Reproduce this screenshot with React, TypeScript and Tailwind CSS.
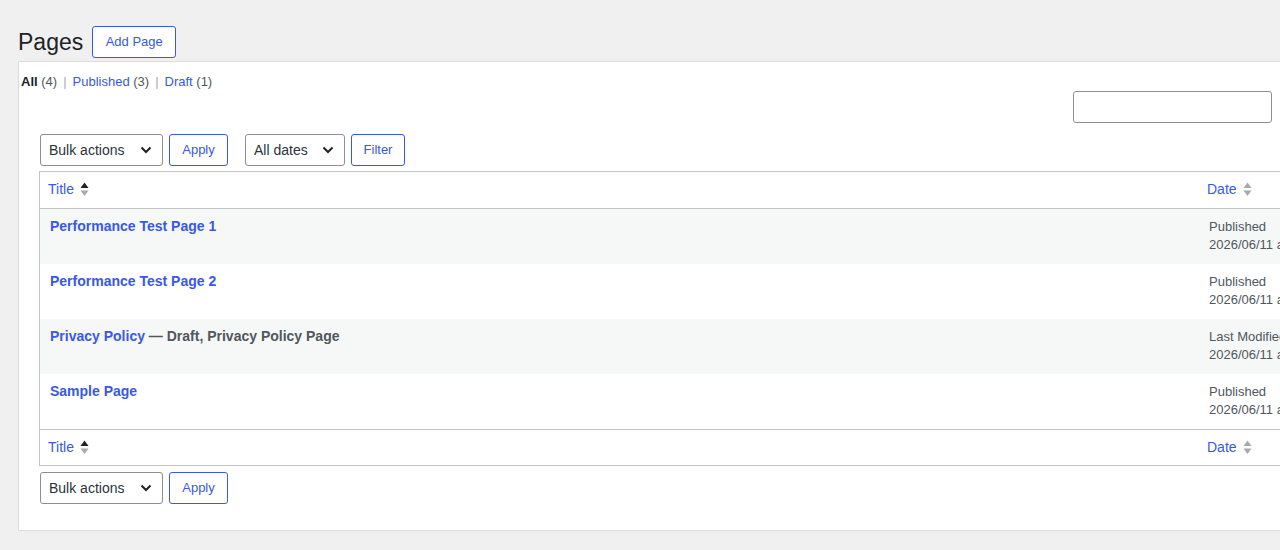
import React from 'react';

const font = { fontFamily: '"Liberation Sans", Arial, sans-serif' };

function Chevron() {
  return (
    <svg width="12" height="8" viewBox="0 0 12 8" className="shrink-0">
      <path d="M1.5 1.5 L6 6 L10.5 1.5" fill="none" stroke="#1d2327" strokeWidth="2" />
    </svg>
  );
}

function SortArrows({ asc }: { asc?: boolean }) {
  return (
    <svg width="9" height="15" viewBox="0 0 9 15" className="ml-[6px] shrink-0">
      <path d="M0.5 6 L4.5 0.5 L8.5 6 Z" fill={asc ? '#1d2327' : '#a7aaad'} />
      <path d="M0.5 8.5 L4.5 14 L8.5 8.5 Z" fill="#a7aaad" />
    </svg>
  );
}

function Select({ label, width }: { label: string; width: string }) {
  return (
    <div
      className={`flex h-[32px] items-center justify-between rounded-[3px] border border-[#8c8f94] bg-white pl-[8px] pr-[10px] text-[14px] text-[#2c3338] ${width}`}
    >
      <span>{label}</span>
      <Chevron />
    </div>
  );
}

function Button({ label, width }: { label: string; width: string }) {
  return (
    <button
      type="button"
      className={`flex h-[32px] items-center justify-center rounded-[3px] border border-[#3858e9] bg-white text-[13px] text-[#3858e9] ${width}`}
    >
      {label}
    </button>
  );
}

const rows = [
  { title: 'Performance Test Page 1', state: '', status: 'Published' },
  { title: 'Performance Test Page 2', state: '', status: 'Published' },
  { title: 'Privacy Policy', state: ' — Draft, Privacy Policy Page', status: 'Last Modified' },
  { title: 'Sample Page', state: '', status: 'Published' },
];

function HeadRow({ bottom }: { bottom?: boolean }) {
  return (
    <div
      className={`flex items-center text-[14px] text-[#3858e9] ${bottom ? 'h-[36px] border-t border-[#c3c4c7]' : 'h-[37px] border-b border-[#c3c4c7] pb-[2px]'}`}
    >
      <div className="flex w-[1159px] items-center pl-[8px]">
        <span>Title</span>
        <SortArrows asc />
      </div>
      <div className="flex flex-1 items-center pl-[8px]">
        <span>Date</span>
        <SortArrows />
      </div>
    </div>
  );
}

export default function App() {
  return (
    <div className="h-[550px] w-[1280px] overflow-hidden bg-[#f0f0f1]" style={font}>
      <div className="flex items-center pl-[18px] pt-[26px]">
        <h1 className="text-[23px] leading-[29px] text-[#1d2327]">Pages</h1>
        <Button label="Add Page" width="ml-[9px] w-[84px]" />
      </div>

      <div className="ml-[18px] mt-[3px] h-[470px] w-[1320px] border border-[#dcdcde] bg-white">
        <div className="pl-[2px] pt-[11px] text-[13px] leading-[18px] text-[#50575e]">
          <span className="font-bold text-[#1d2327]">All</span> (4)
          <span className="mx-[6px] text-[#a7aaad]">|</span>
          <span className="text-[#3858e9]">Published</span> (3)
          <span className="mx-[6px] text-[#a7aaad]">|</span>
          <span className="text-[#3858e9]">Draft</span> (1)
        </div>

        <div className="flex w-[1253px] justify-end">
          <div className="h-[32px] w-[199px] rounded-[3px] border border-[#8c8f94] bg-white" />
        </div>

        <div className="ml-[21px] mt-[11px] flex items-center">
          <Select label="Bulk actions" width="w-[123px]" />
          <Button label="Apply" width="ml-[6px] w-[59px]" />
          <Select label="All dates" width="ml-[17px] w-[100px]" />
          <Button label="Filter" width="ml-[6px] w-[54px]" />
        </div>

        <div className="ml-[20px] mt-[5px] w-[1320px] border border-[#c3c4c7] bg-white">
          <HeadRow />
          {rows.map((r, i) => (
            <div key={r.title} className={`flex h-[55px] ${i % 2 === 0 ? 'bg-[#f6f7f7]' : 'bg-white'}`}>
              <div className="w-[1159px] pl-[10px] pt-[8px] text-[14px] font-bold leading-[19px]">
                <span className="text-[#3858e9]">{r.title}</span>
                {r.state && <span className="text-[#50575e]">{r.state}</span>}
              </div>
              <div className="flex-1 whitespace-nowrap pl-[10px] pt-[9px] text-[13px] leading-[18px] text-[#50575e]">
                <div>{r.status}</div>
                <div>2026/06/11 at 10:00 am</div>
              </div>
            </div>
          ))}
          <HeadRow bottom />
        </div>

        <div className="ml-[21px] mt-[6px] flex items-center">
          <Select label="Bulk actions" width="w-[123px]" />
          <Button label="Apply" width="ml-[6px] w-[59px]" />
        </div>
      </div>
    </div>
  );
}
